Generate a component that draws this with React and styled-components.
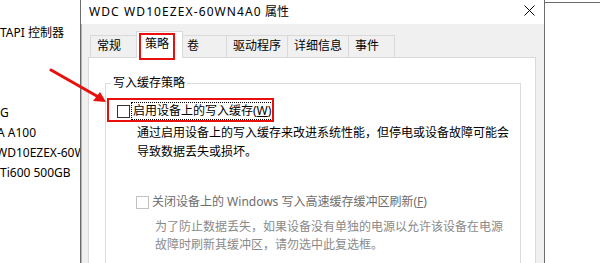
import styled, { createGlobalStyle } from 'styled-components';

const GlobalStyle = createGlobalStyle`
  html, body {
    margin: 0;
    padding: 0;
    background: #fff;
  }
  body {
    font-family: "Noto Sans", "Noto Sans CJK SC", sans-serif;
    font-size: 12px;
    color: #000;
  }
`

const bgLines = [
  { text: 'TAPI 控制器', shift: 0 },
  { text: '', shift: 0 },
  { text: '', shift: 0 },
  { text: '', shift: 0 },
  { text: 'G', shift: 0 },
  { text: 'A A100', shift: -3 },
  { text: 'WD10EZEX-60WN4A0', shift: -4 },
  { text: 'Ti600 500GB', shift: 0 },
];

const tabs = ['常规', '策略', '卷', '驱动程序', '详细信息', '事件'];

const App = () => {
  return (
    <Screen>
      <GlobalStyle />
      <BackWindow>
        {bgLines.map((line, i) => (
          <BackLine key={i} $shift={line.shift}>{line.text}</BackLine>
        ))}
      </BackWindow>
      <Dialog>
        <TitleBar>
          <Title><Latin>WDC WD10EZEX-60WN4A0</Latin> 属性</Title>
          <CloseButton>
            <svg width="11" height="11" viewBox="0 0 11 11">
              <line x1="0.5" y1="0.5" x2="10.5" y2="10.5" stroke="#000" strokeWidth="1" />
              <line x1="10.5" y1="0.5" x2="0.5" y2="10.5" stroke="#000" strokeWidth="1" />
            </svg>
          </CloseButton>
        </TitleBar>
        <Body>
          <TabStrip>
            {tabs.map((t) => (
              <Tab key={t} $active={t === '策略'}>
                {t}
                {t === '策略' && <TabMark />}
              </Tab>
            ))}
          </TabStrip>
          <Panel>
            <GroupBox>
              <Legend>写入缓存策略</Legend>
              <CheckRow>
                <Mark $w={167} $h={24} $x={-10} $y={-4} />
                <CheckBox />
                <FocusLabel>启用设备上的写入缓存(<u>W</u>)</FocusLabel>
              </CheckRow>
              <Desc $indent={20} $lh={19} $top={3}>
                通过启用设备上的写入缓存来改进系统性能，但停电或设备故障可能会<br />
                导致数据丢失或损坏。
              </Desc>
              <CheckRow $indent={19} $top={32}>
                <CheckBox $disabled />
                <Label $disabled>关闭设备上的 Windows 写入高速缓存缓冲区刷新(<u>F</u>)</Label>
              </CheckRow>
              <Desc $indent={38} $lh={18} $top={7} $disabled>
                为了防止数据丢失，如果设备没有单独的电源以允许该设备在电源<br />
                故障时刷新其缓冲区，请勿选中此复选框。
              </Desc>
            </GroupBox>
          </Panel>
        </Body>
      </Dialog>
      <SideWindow />
      <Arrow width="60" height="40" viewBox="0 0 60 40">
        <line x1="2" y1="2" x2="53" y2="31" stroke="#e8100c" strokeWidth="3" strokeLinecap="round" />
        <polygon points="57,34 44,33 51,24" fill="#e8100c" />
      </Arrow>
    </Screen>
  );
}

const Screen = styled.div`
  position: relative;
  display: flex;
  width: 600px;
  height: 263px;
  overflow: hidden;
  background: #fff;
`
const BackWindow = styled.div`
  width: 80px;
  flex: none;
  padding-top: 23px;
  overflow: hidden;
  white-space: nowrap;
`
const BackLine = styled.div`
  height: 20px;
  line-height: 20px;
  margin-left: ${(p) => p.$shift}px;
`
const Dialog = styled.div`
  width: 463px;
  flex: none;
  display: flex;
  flex-direction: column;
  border-left: 1px solid #6b6b6b;
  border-right: 1px solid #6b6b6b;
  box-shadow: inset 1px 0 0 #b4b4b4;
  background: #f0f0f0;
`
const TitleBar = styled.div`
  height: 26px;
  background: #fff;
  display: flex;
  justify-content: space-between;
  padding: 0 9px 0 8px;
`
const Title = styled.div`
  line-height: 24px;
  font-size: 12px;
  white-space: nowrap;
`
const Latin = styled.span`
  letter-spacing: 1.1px;
`
const CloseButton = styled.div`
  padding-top: 5px;
  svg {
    display: block;
  }
`
const Body = styled.div`
  flex: 1;
  padding: 7px 8px 0 7px;
  display: flex;
  flex-direction: column;
`
const TabStrip = styled.div`
  display: flex;
  align-items: flex-end;
  height: 26px;
  padding-left: 2px;
`
const Tab = styled.div`
  position: relative;
  box-sizing: border-box;
  min-width: 47px;
  height: ${(p) => (p.$active ? 27 : 22)}px;
  margin: 0 ${(p) => (p.$active ? -2 : 0)}px ${(p) => (p.$active ? -1 : 0)}px -1px;
  padding: 0 6px 0 ${(p) => (p.$active ? 8 : 6)}px;
  line-height: ${(p) => (p.$active ? 24 : 20)}px;
  border: 1px solid #d9d9d9;
  border-bottom: none;
  background: ${(p) => (p.$active ? '#fff' : '#f0f0f0')};
  z-index: ${(p) => (p.$active ? 1 : 0)};
  &:first-child {
    margin-left: 0;
  }
`
const TabMark = styled.div`
  position: absolute;
  left: 2px;
  top: 1px;
  width: 36px;
  height: 27px;
  box-sizing: border-box;
  border: 2px solid #e8100c;
`
const Panel = styled.div`
  flex: 1;
  background: #fff;
  border: 1px solid #d9d9d9;
  border-bottom: none;
  padding: 17px 14px 0 16px;
`
const GroupBox = styled.fieldset`
  margin: 0;
  padding: 0 0 20px 11px;
  border: 1px solid #dcdcdc;
  height: 200px;
  box-sizing: border-box;
`
const Legend = styled.legend`
  margin-left: -6px;
  padding: 0 2px;
  line-height: 16px;
`
const CheckRow = styled.div`
  position: relative;
  display: flex;
  align-items: center;
  height: 18px;
  margin-top: ${(p) => p.$top ?? 11}px;
  padding-left: ${(p) => p.$indent ?? 0}px;
`
const Mark = styled.div`
  position: absolute;
  left: ${(p) => p.$x}px;
  top: ${(p) => p.$y}px;
  width: ${(p) => p.$w}px;
  height: ${(p) => p.$h}px;
  box-sizing: border-box;
  border: 2px solid #e8100c;
`
const CheckBox = styled.div`
  width: 13px;
  height: 13px;
  box-sizing: border-box;
  border: 1px solid ${(p) => (p.$disabled ? '#c2c2c2' : '#333')};
  background: #fff;
  flex: none;
`
const Label = styled.span`
  margin-left: 3px;
  color: ${(p) => (p.$disabled ? '#6d6d6d' : '#000')};
  line-height: 16px;
  white-space: nowrap;
`
const FocusLabel = styled(Label)`
  margin-left: 2px;
  padding: 0 1px;
  outline: 1px dotted #000;
  outline-offset: 0;
`
const Desc = styled.div`
  margin-top: ${(p) => p.$top}px;
  padding-left: ${(p) => p.$indent}px;
  line-height: ${(p) => p.$lh}px;
  white-space: nowrap;
  color: ${(p) => (p.$disabled ? '#8a8a8a' : '#000')};
`
const SideWindow = styled.div`
  flex: 1;
  margin-top: 2px;
  border-top: 1px solid #6b6b6b;
`
const Arrow = styled.svg`
  position: absolute;
  left: 49px;
  top: 68px;
`

export default App;
